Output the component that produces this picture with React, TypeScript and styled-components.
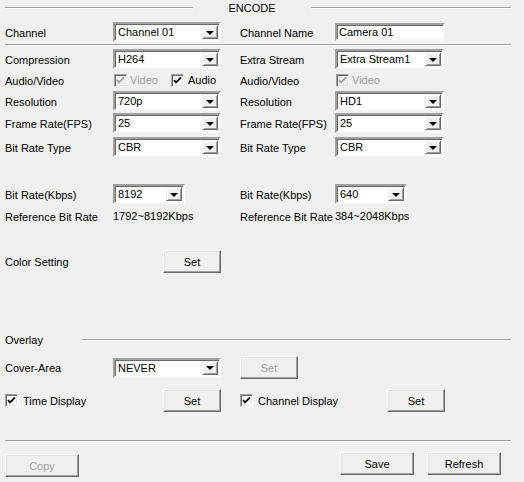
import React from 'react';
import styled, { createGlobalStyle } from 'styled-components';

const GlobalStyle = createGlobalStyle`
  html, body {
    margin: 0;
    padding: 0;
    background: #f0f0f0;
  }
  * {
    box-sizing: border-box;
  }
`;

const Page = styled.div`
  width: 524px;
  height: 482px;
  background: #f0f0f0;
  padding: 0 13px 0 5px;
  font-family: 'Liberation Sans', Arial, sans-serif;
  font-size: 11px;
  color: #000;
  overflow: hidden;
`;

const Etched = styled.div<{ $width?: number }>`
  height: 2px;
  border-top: 1px solid #a0a0a0;
  border-bottom: 1px solid #fff;
  ${(p) => (p.$width ? `width: ${p.$width}px;` : 'flex: 1;')}
`;

const Header = styled.div`
  height: 16px;
  display: flex;
  align-items: center;
`;

const HeaderTitle = styled.div`
  width: 118px;
  text-align: center;
  font-size: 11px;
`;

const Separator = styled(Etched)<{ $top: number }>`
  margin-top: ${(p) => p.$top}px;
`;

const Row = styled.div<{ $top: number; $height: number }>`
  display: grid;
  grid-template-columns: 108px 108px 19px 95px 110px;
  align-items: center;
  margin-top: ${(p) => p.$top}px;
  height: ${(p) => p.$height}px;
`;

const Label = styled.div<{ $col?: number }>`
  grid-column: ${(p) => p.$col ?? 1};
  white-space: nowrap;
  padding-top: 1px;
`;

const Cell = styled.div<{ $col: number; $end?: boolean }>`
  grid-column: ${(p) => p.$col};
  display: flex;
  align-items: center;
  justify-content: ${(p) => (p.$end ? 'flex-end' : 'flex-start')};
  white-space: nowrap;
`;

const ComboBox = styled.div<{ $width: number }>`
  width: ${(p) => p.$width}px;
  height: 20px;
  display: flex;
  align-items: stretch;
  background: #fff;
  border-style: solid;
  border-width: 2px;
  border-color: #a0a0a0 #f8f8f8 #f8f8f8 #a0a0a0;
  box-shadow: inset 1px 1px 0 #696969;
`;

const ComboText = styled.div`
  flex: 1;
  padding: 1px 0 0 3px;
  line-height: 15px;
  font-size: 11px;
`;

const ArrowButton = styled.div`
  width: 16px;
  margin: 1px 1px 1px 0;
  background: #f0f0f0;
  border-style: solid;
  border-width: 1px;
  border-color: #f0f0f0 #696969 #696969 #f0f0f0;
  box-shadow: inset 1px 1px 0 #fff, inset -1px -1px 0 #a0a0a0;
  display: flex;
  align-items: center;
  justify-content: center;
`;

const Triangle = styled.div`
  width: 0;
  height: 0;
  border-left: 4px solid transparent;
  border-right: 4px solid transparent;
  border-top: 4px solid #000;
  margin-top: 1px;
`;

const TextInput = styled.div`
  width: 110px;
  height: 18px;
  background: #fff;
  border-style: solid;
  border-width: 2px;
  border-color: #a0a0a0 #f8f8f8 #f8f8f8 #a0a0a0;
  box-shadow: inset 1px 1px 0 #696969;
  padding: 1px 0 0 2px;
  font-size: 11px;
  line-height: 13px;
`;

const Button = styled.div<{ $width: number; $disabled?: boolean }>`
  width: ${(p) => p.$width}px;
  height: 23px;
  display: flex;
  align-items: center;
  justify-content: center;
  background: #f0f0f0;
  border-style: solid;
  border-width: 1px;
  border-color: #fff #696969 #696969 #fff;
  box-shadow: inset -1px -1px 0 #a0a0a0, inset 1px 1px 0 #e3e3e3;
  color: ${(p) => (p.$disabled ? '#a0a0a0' : '#000')};
  font-size: 11px;
`;

const CheckBox = styled.div<{ $disabled?: boolean }>`
  width: 13px;
  height: 13px;
  flex-shrink: 0;
  background: ${(p) => (p.$disabled ? '#f0f0f0' : '#fff')};
  border-style: solid;
  border-width: 1px;
  border-color: #a0a0a0 #fff #fff #a0a0a0;
  box-shadow: inset 1px 1px 0 #696969, inset -1px -1px 0 #e3e3e3;
  display: flex;
  align-items: center;
  justify-content: center;
`;

const CheckLabel = styled.span<{ $disabled?: boolean; $gap: number }>`
  margin-left: ${(p) => p.$gap}px;
  color: ${(p) => (p.$disabled ? '#a0a0a0' : '#000')};
  font-size: 11px;
`;

const Spacer = styled.div<{ $width: number }>`
  width: ${(p) => p.$width}px;
  flex-shrink: 0;
`;

const OverlayRow = styled.div`
  display: flex;
  align-items: center;
  margin-top: 59px;
  height: 16px;
`;

const OverlayTitle = styled.div`
  width: 77px;
`;

const Footer = styled.div`
  display: flex;
  align-items: flex-start;
  justify-content: space-between;
  margin-top: 10px;
  padding-right: 10px;
`;

const FooterRight = styled.div`
  display: flex;
  gap: 13px;
`;

const CopyWrap = styled.div`
  margin-top: 2px;
`;

const Check = ({ disabled }: { disabled?: boolean }) => (
  <CheckBox $disabled={disabled}>
    <svg width="9" height="9" viewBox="0 0 9 9">
      <path
        d="M1 4 L3 6.5 L8 1.5"
        fill="none"
        stroke={disabled ? '#a0a0a0' : '#000'}
        strokeWidth="1.8"
      />
    </svg>
  </CheckBox>
);

const Combo = ({ value, width }: { value: string; width: number }) => (
  <ComboBox $width={width}>
    <ComboText>{value}</ComboText>
    <ArrowButton>
      <Triangle />
    </ArrowButton>
  </ComboBox>
);

export default function App() {
  return (
    <Page>
      <GlobalStyle />
      <Header>
        <Etched $width={188} />
        <HeaderTitle>ENCODE</HeaderTitle>
        <Etched $width={200} />
      </Header>

      <Row $top={6} $height={20}>
        <Label>Channel</Label>
        <Cell $col={2}>
          <Combo value="Channel 01" width={108} />
        </Cell>
        <Label $col={4}>Channel Name</Label>
        <Cell $col={5}>
          <TextInput>Camera 01</TextInput>
        </Cell>
      </Row>

      <Separator $top={2} />

      <Row $top={3} $height={20}>
        <Label>Compression</Label>
        <Cell $col={2}>
          <Combo value="H264" width={108} />
        </Cell>
        <Label $col={4}>Extra Stream</Label>
        <Cell $col={5}>
          <Combo value="Extra Stream1" width={109} />
        </Cell>
      </Row>

      <Row $top={0} $height={22}>
        <Label>Audio/Video</Label>
        <Cell $col={2}>
          <Spacer $width={1} />
          <Check disabled />
          <CheckLabel $disabled $gap={3}>Video</CheckLabel>
          <Spacer $width={13} />
          <Check />
          <CheckLabel $gap={4}>Audio</CheckLabel>
        </Cell>
        <Label $col={4}>Audio/Video</Label>
        <Cell $col={5}>
          <Spacer $width={1} />
          <Check disabled />
          <CheckLabel $disabled $gap={3}>Video</CheckLabel>
        </Cell>
      </Row>

      <Row $top={0} $height={20}>
        <Label>Resolution</Label>
        <Cell $col={2}>
          <Combo value="720p" width={108} />
        </Cell>
        <Label $col={4}>Resolution</Label>
        <Cell $col={5}>
          <Combo value="HD1" width={109} />
        </Cell>
      </Row>

      <Row $top={2} $height={20}>
        <Label>Frame Rate(FPS)</Label>
        <Cell $col={2}>
          <Combo value="25" width={108} />
        </Cell>
        <Label $col={4}>Frame Rate(FPS)</Label>
        <Cell $col={5}>
          <Combo value="25" width={109} />
        </Cell>
      </Row>

      <Row $top={4} $height={20}>
        <Label>Bit Rate Type</Label>
        <Cell $col={2}>
          <Combo value="CBR" width={108} />
        </Cell>
        <Label $col={4}>Bit Rate Type</Label>
        <Cell $col={5}>
          <Combo value="CBR" width={109} />
        </Cell>
      </Row>

      <Row $top={27} $height={19}>
        <Label>Bit Rate(Kbps)</Label>
        <Cell $col={2}>
          <Combo value="8192" width={72} />
        </Cell>
        <Label $col={4}>Bit Rate(Kbps)</Label>
        <Cell $col={5}>
          <Combo value="640" width={72} />
        </Cell>
      </Row>

      <Row $top={4} $height={18}>
        <Label>Reference Bit Rate</Label>
        <Cell $col={2}>1792~8192Kbps</Cell>
        <Label $col={4}>Reference Bit Rate</Label>
        <Cell $col={5}>384~2048Kbps</Cell>
      </Row>

      <Row $top={25} $height={23}>
        <Label>Color Setting</Label>
        <Cell $col={2} $end>
          <Button $width={58}>Set</Button>
        </Cell>
      </Row>

      <OverlayRow>
        <OverlayTitle>Overlay</OverlayTitle>
        <Etched />
      </OverlayRow>

      <Row $top={8} $height={22}>
        <Label>Cover-Area</Label>
        <Cell $col={2}>
          <Combo value="NEVER" width={108} />
        </Cell>
        <Cell $col={4}>
          <Button $width={58} $disabled>
            Set
          </Button>
        </Cell>
      </Row>

      <Row $top={11} $height={23}>
        <Cell $col={1}>
          <Check />
          <CheckLabel $gap={5}>Time Display</CheckLabel>
        </Cell>
        <Cell $col={2} $end>
          <Button $width={58}>Set</Button>
        </Cell>
        <Cell $col={4}>
          <Check />
          <CheckLabel $gap={5}>Channel Display</CheckLabel>
        </Cell>
        <Cell $col={5} $end>
          <Button $width={58}>Set</Button>
        </Cell>
      </Row>

      <Separator $top={28} />

      <Footer>
        <CopyWrap>
          <Button $width={74} $disabled>
            Copy
          </Button>
        </CopyWrap>
        <FooterRight>
          <Button $width={74}>Save</Button>
          <Button $width={74}>Refresh</Button>
        </FooterRight>
      </Footer>
    </Page>
  );
}
